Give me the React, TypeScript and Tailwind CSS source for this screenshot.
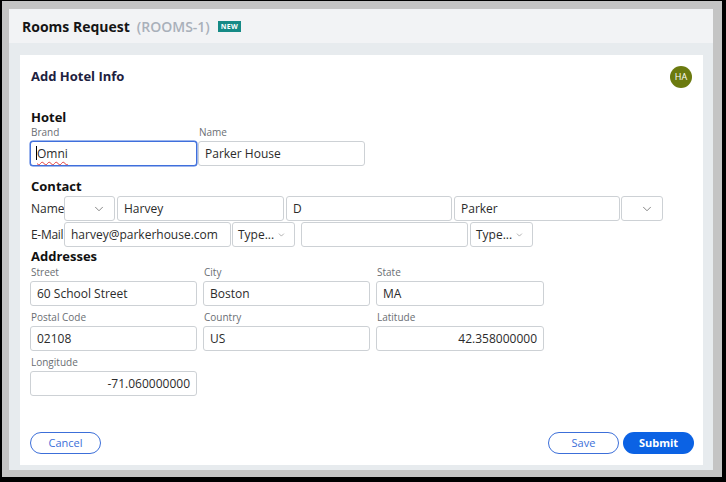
import { ChevronDown } from 'lucide-react';

const font = { fontFamily: '"Open Sans", "Liberation Sans", sans-serif' };

function Field({ value, width = 'w-[167px]', align = 'left', focused = false }: { value: string; width?: string; align?: 'left' | 'right'; focused?: boolean }) {
  return (
    <div
      className={`${width} h-[25px] shrink-0 rounded-[3px] border bg-white flex items-center px-[6px] text-[12px] text-[#2b2b2b] ${
        focused ? 'border-[#3f6fdc] shadow-[0_0_0_0.5px_#3f6fdc]' : 'border-[#cdd1d5]'
      } ${align === 'right' ? 'justify-end' : ''}`}
    >
      {focused ? (
        <span className="relative">
          <span className="absolute -left-[1px] top-[1px] h-[14px] w-px bg-black" />
          <span className="underline decoration-wavy decoration-[#e04040] decoration-[1px] underline-offset-[3px]">{value}</span>
        </span>
      ) : (
        value
      )}
    </div>
  );
}

function Select({ value = '', width }: { value?: string; width: string }) {
  return (
    <div className={`${width} h-[25px] shrink-0 rounded-[3px] border border-[#cdd1d5] bg-white flex items-center justify-end pl-[5px] pr-[8px] gap-[3px] text-[12px] text-[#2b2b2b]`}>
      {value && <span className="flex-1 whitespace-nowrap">{value}</span>}
      <ChevronDown size={14} strokeWidth={1.2} className="text-[#555]" />
    </div>
  );
}

function Labeled({ label, children }: { label: string; children: React.ReactNode }) {
  return (
    <div className="flex flex-col">
      <div className="h-[12px] leading-[12px] text-[10px] text-[#6a6e73] pl-[1px] mb-[3px]">{label}</div>
      {children}
    </div>
  );
}

function Heading({ children }: { children: React.ReactNode }) {
  return <div className="h-[16px] leading-[16px] text-[13px] font-bold text-[#111] pl-[1px]">{children}</div>;
}

export default function App() {
  return (
    <div style={font} className="w-[726px] h-[482px] bg-black pt-[1px] pl-[2px] pr-[4px] pb-[5px]">
      <div className="w-full h-full bg-[#c4c4c4] pt-[8px] pl-[7px] pr-[9px] pb-[7px]">
        <div className="w-full h-full flex flex-col bg-[#e7ebee]">
          <div className="h-[34px] shrink-0 bg-[#f2f3f5] flex items-center pl-[13px] gap-[7px]">
            <span className="text-[14px] font-bold text-[#151515]">Rooms Request</span>
            <span className="text-[14px] font-semibold text-[#a9b0ba]">(ROOMS-1)</span>
            <span className="ml-[1px] h-[11px] px-[3px] bg-[#168a86] text-white text-[7px] font-bold leading-[11px] tracking-[0.3px]">NEW</span>
          </div>
          <div className="flex-1 mt-[12px] ml-[11px] mr-[10px] mb-[5px] bg-white flex flex-col pt-[11px] pl-[10px] pr-[11px] pb-[11px]">
            <div className="flex items-center justify-between h-[22px]">
              <span className="pl-[1px] text-[13px] font-bold text-[#1d2140]">Add Hotel Info</span>
              <span className="w-[22px] h-[22px] rounded-full bg-[#6b7a0f] text-white text-[9px] flex items-center justify-center">HA</span>
            </div>

            <div className="mt-[21px]">
              <Heading>Hotel</Heading>
            </div>
            <div className="flex gap-[1px] mt-[1px]">
              <Labeled label="Brand">
                <Field value="Omni" focused />
              </Labeled>
              <Labeled label="Name">
                <Field value="Parker House" />
              </Labeled>
            </div>

            <div className="mt-[12px]">
              <Heading>Contact</Heading>
            </div>
            <div className="flex items-center mt-[2px]">
              <span className="w-[34px] shrink-0 pl-[1px] text-[12px] text-[#2b2b2b] whitespace-nowrap">Name</span>
              <Select width="w-[51px]" />
              <div className="w-[2px]" />
              <Field value="Harvey" />
              <div className="w-[2px]" />
              <Field value="D" width="w-[166px]" />
              <div className="w-[2px]" />
              <Field value="Parker" width="w-[166px]" />
              <div className="w-[1px]" />
              <Select width="w-[42px]" />
            </div>
            <div className="flex items-center mt-[1px]">
              <span className="w-[34px] shrink-0 pl-[1px] text-[12px] text-[#2b2b2b] whitespace-nowrap tracking-[-0.3px]">E-Mail</span>
              <Field value="harvey@parkerhouse.com" />
              <div className="w-[1px]" />
              <Select value="Type..." width="w-[63px]" />
              <div className="w-[6px]" />
              <Field value="" />
              <div className="w-[2px]" />
              <Select value="Type..." width="w-[63px]" />
            </div>

            <div className="mt-[1px]">
              <Heading>Addresses</Heading>
            </div>
            <div className="grid grid-cols-[167px_167px_168px] gap-x-[6px] gap-y-[5px] mt-[2px]">
              <Labeled label="Street">
                <Field value="60 School Street" />
              </Labeled>
              <Labeled label="City">
                <Field value="Boston" />
              </Labeled>
              <Labeled label="State">
                <Field value="MA" width="w-[168px]" />
              </Labeled>
              <Labeled label="Postal Code">
                <Field value="02108" />
              </Labeled>
              <Labeled label="Country">
                <Field value="US" />
              </Labeled>
              <Labeled label="Latitude">
                <Field value="42.358000000" align="right" width="w-[168px]" />
              </Labeled>
              <Labeled label="Longitude">
                <Field value="-71.060000000" align="right" />
              </Labeled>
            </div>

            <div className="mt-auto -mr-[2px] flex items-center">
              <button className="w-[71px] h-[22px] rounded-full border border-[#3c6fd9] text-[#3c6fd9] text-[11px]">Cancel</button>
              <div className="flex-1" />
              <button className="w-[71px] h-[22px] rounded-full border border-[#3c6fd9] text-[#3c6fd9] text-[11px]">Save</button>
              <button className="ml-[4px] w-[71px] h-[22px] rounded-full bg-[#0b62e4] text-white text-[11px] font-bold">Submit</button>
            </div>
          </div>
        </div>
      </div>
    </div>
  );
}
